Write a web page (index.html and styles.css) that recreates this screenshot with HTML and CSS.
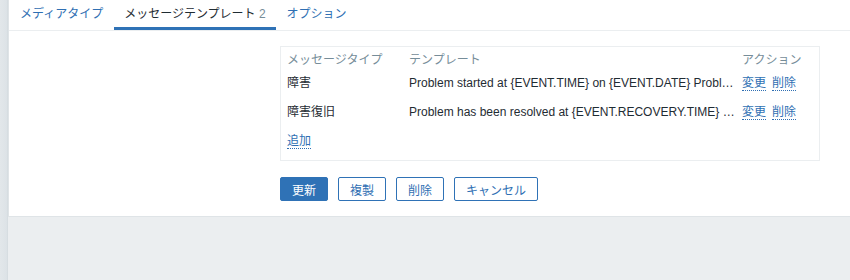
FILE: index.html
```html
<!DOCTYPE html>
<html lang="ja">
<head>
  <meta charset="UTF-8">
  <title>メディアタイプ</title>
  <link rel="stylesheet" href="styles.css">
</head>
<body>
  <div class="sidebar-edge"></div>
  <div class="main">
    <div class="card">
      <ul class="tabs">
        <li class="tab">メディアタイプ</li>
        <li class="tab active">メッセージテンプレート <span class="count">2</span></li>
        <li class="tab">オプション</li>
      </ul>

      <div class="form-row">
        <div class="form-label"></div>
        <div class="form-field">
          <div class="table-box">
            <table class="templates">
              <colgroup>
                <col class="col-type">
                <col class="col-template">
                <col class="col-action">
              </colgroup>
              <thead>
                <tr>
                  <th>メッセージタイプ</th>
                  <th>テンプレート</th>
                  <th>アクション</th>
                </tr>
              </thead>
              <tbody>
                <tr>
                  <td>障害</td>
                  <td class="template-text">Problem started at {EVENT.TIME} on {EVENT.DATE} Problem name: {EVENT.NAME} Host: {HOST.NAME}</td>
                  <td><a class="link">変更</a><a class="link">削除</a></td>
                </tr>
                <tr>
                  <td>障害復旧</td>
                  <td class="template-text">Problem has been resolved at {EVENT.RECOVERY.TIME} on {EVENT.RECOVERY.DATE}</td>
                  <td><a class="link">変更</a><a class="link">削除</a></td>
                </tr>
                <tr class="add-row">
                  <td colspan="3"><a class="link">追加</a></td>
                </tr>
              </tbody>
            </table>
          </div>
        </div>
      </div>

      <div class="form-row buttons-row">
        <div class="form-label"></div>
        <div class="form-field buttons">
          <button class="btn primary">更新</button>
          <button class="btn">複製</button>
          <button class="btn">削除</button>
          <button class="btn">キャンセル</button>
        </div>
      </div>
    </div>
  </div>
</body>
</html>
```

FILE: styles.css
```css
* {
  margin: 0;
  padding: 0;
  box-sizing: border-box;
}

html, body {
  height: 100%;
}

body {
  display: flex;
  font-family: "Liberation Sans", "Noto Sans CJK JP", sans-serif;
  font-size: 12px;
  color: #1f2c33;
  background-color: #ebeef0;
}

/* sidebar edge on the left */
.sidebar-edge {
  width: 8px;
  flex-shrink: 0;
  background: linear-gradient(to right, #e2e7ea, #dde3e7 80%, #d3dade);
}

.main {
  flex: 1;
}

.card {
  background-color: #ffffff;
  border-bottom: 1px solid #dfe4e7;
  border-left: 1px solid #dfe4e7;
  padding-bottom: 15px;
}

/* Tabs */
.tabs {
  display: flex;
  list-style: none;
  height: 31px;
  border-bottom: 1px solid #ebeef0;
  padding-left: 1px;
}

.tab {
  padding: 2px 10px 0 10px;
  height: 30px;
  line-height: 25px;
  color: #2f6fb3;
  border-bottom: 3px solid transparent;
  margin-right: 1px;
}

.tab.active {
  color: #1f2c33;
  border-bottom-color: #2f72b6;
}

.tab .count {
  color: #768d99;
}

/* Form layout */
.form-row {
  display: flex;
}

.form-label {
  width: 271px;
  flex-shrink: 0;
}

.form-field {
  flex: 1;
}

.table-box {
  margin-top: 15px;
  width: 540px;
  border: 1px solid #ebeef0;
}

.templates {
  width: 100%;
  border-collapse: collapse;
  table-layout: fixed;
}

.col-type { width: 122px; }
.col-template { width: 333px; }

.templates th,
.templates td {
  text-align: left;
  font-weight: normal;
  line-height: 14px;
  padding: 6px 6px 9px 6px;
  white-space: nowrap;
  vertical-align: top;
}

.templates th {
  color: #768d99;
  padding-bottom: 3px;
}

.templates td.template-text {
  overflow: hidden;
  text-overflow: ellipsis;
  padding-right: 0;
}

.add-row td {
  padding-bottom: 12px;
}

.link {
  color: #2f6fb3;
  border-bottom: 1px dotted #2f6fb3;
  margin-right: 6px;
  cursor: pointer;
}

/* Buttons */
.buttons-row {
  margin-top: 16px;
}

.buttons {
  display: flex;
  gap: 10px;
}

.btn {
  height: 24px;
  padding: 0 11px;
  font-family: inherit;
  font-size: 12px;
  color: #2f6fb3;
  background-color: #ffffff;
  border: 1px solid #2f72b6;
  border-radius: 2px;
}

.btn.primary {
  color: #ffffff;
  background-color: #2f72b6;
}
```
